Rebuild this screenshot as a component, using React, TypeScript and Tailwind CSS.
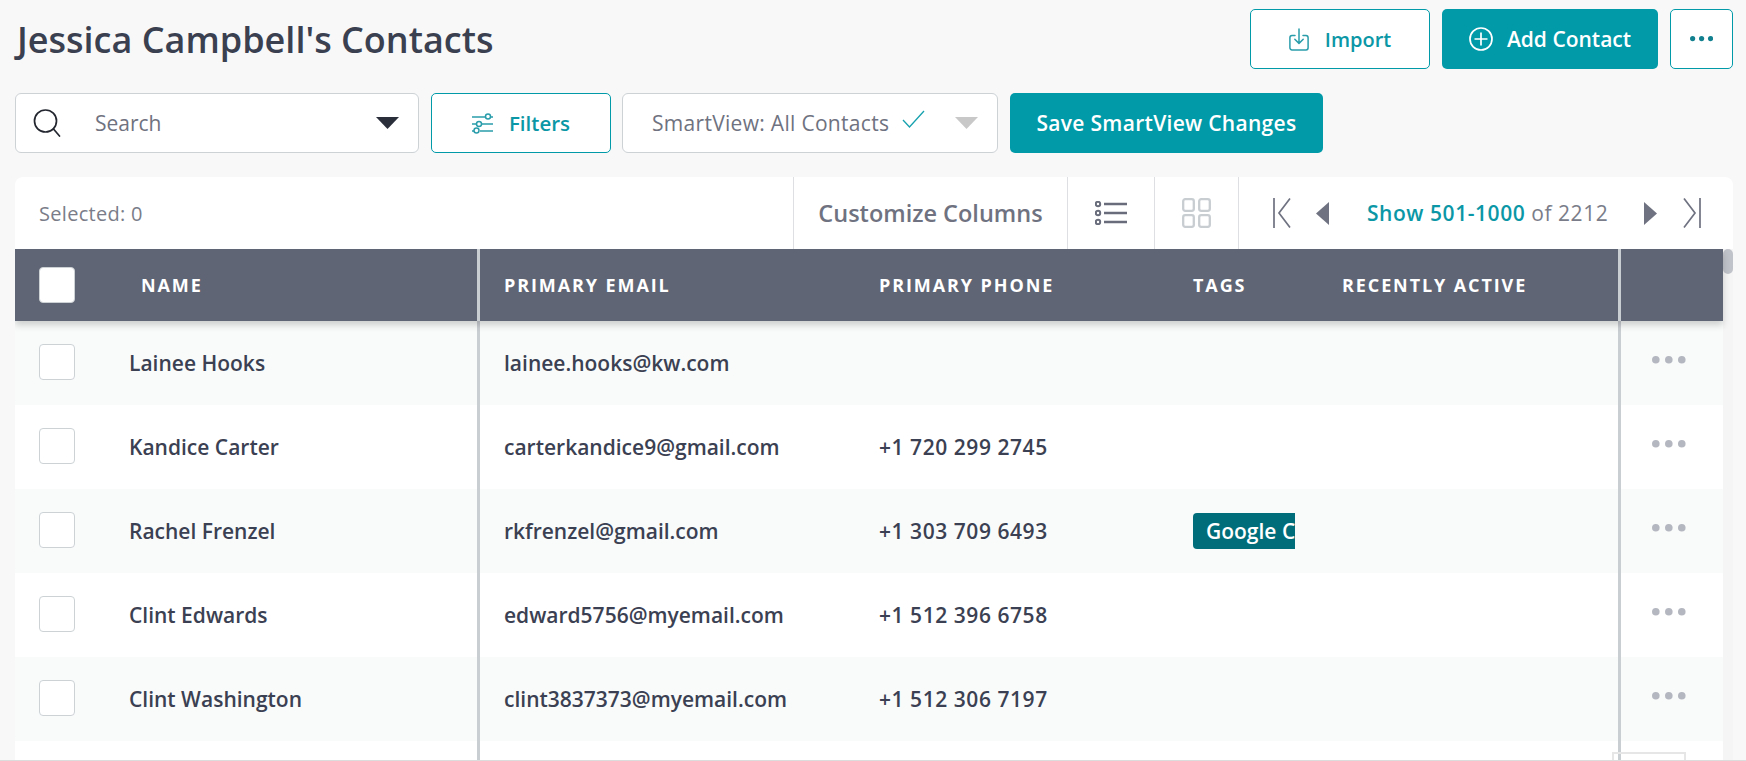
import React from "react";

const rows = [
  { name: "Lainee Hooks", email: "lainee.hooks@kw.com", phone: "", tag: false, dim: true },
  { name: "Kandice Carter", email: "carterkandice9@gmail.com", phone: "+1 720 299 2745", tag: false, dim: false },
  { name: "Rachel Frenzel", email: "rkfrenzel@gmail.com", phone: "+1 303 709 6493", tag: true, dim: true },
  { name: "Clint Edwards", email: "edward5756@myemail.com", phone: "+1 512 396 6758", tag: false, dim: false },
  { name: "Clint Washington", email: "clint3837373@myemail.com", phone: "+1 512 306 7197", tag: false, dim: true },
];

function Dots({ fill, r = 3.4, gap = 13 }: { fill: string; r?: number; gap?: number }) {
  const w = gap * 2 + r * 2;
  return (
    <svg width={w} height={r * 2} viewBox={`0 0 ${w} ${r * 2}`}>
      {[0, 1, 2].map((i) => (
        <circle key={i} cx={r + i * gap} cy={r} r={r} fill={fill} />
      ))}
    </svg>
  );
}

export default function App() {
  return (
    <div className="relative flex h-[761px] w-full flex-col overflow-hidden bg-[#f8f8f8] pt-[9px] pr-[13px] pl-[15px] font-['Open_Sans',sans-serif]">
      <div className="flex h-[60px] items-center">
        <h1 className="flex-1 pt-[2px] pl-[2px] text-[36px] leading-[58px] font-semibold text-[#3a4050]">Jessica Campbell's Contacts</h1>
        <button className="mr-3 flex h-[60px] w-[180px] items-center justify-center gap-4 rounded-[5px] border border-[#009aa9] bg-white text-[20px] font-semibold text-[#0b97a6]">
          <svg width="20" height="23" viewBox="0 0 20 23" fill="none" stroke="#2a9dab" strokeWidth="1.5" strokeLinecap="round" strokeLinejoin="round">
            <path d="M6 7.5H3A2.2 2.2 0 0 0 .9 9.7v9.9A2.2 2.2 0 0 0 3 21.9h14a2.2 2.2 0 0 0 2.1-2.2V9.700A2.2 2.2 0 0 0 17 7.500h-3" />
            <path d="M10 1v14M5.800 11.200 10 15.400l4.200-4.200" />
          </svg>
          <span className="pt-[2px]">Import</span>
        </button>
        <button className="mr-3 flex h-[60px] w-[216px] items-center justify-center gap-[14px] rounded-[5px] bg-[#009aa9] text-[21px] font-semibold text-white">
          <svg width="24" height="24" viewBox="0 0 24 24" fill="none" stroke="#fff" strokeWidth="1.700">
            <circle cx="12" cy="12" r="11" />
            <path d="M12 5.500v13M5.500 12h13" />
          </svg>
          <span className="pt-[2px]">Add Contact</span>
        </button>
        <button className="flex h-[60px] w-[63px] items-center justify-center rounded-[5px] border border-[#009aa9] bg-white">
          <Dots fill="#13808f" r={2.600} gap={9} />
        </button>
      </div>

      <div className="mt-6 flex h-[60px] items-stretch gap-3">
        <div className="flex w-[404px] items-center rounded-[6px] border border-[#cdd2d5] bg-white pr-[19px] pl-[17px]">
          <svg width="28" height="28" viewBox="0 0 28 28" fill="none" stroke="#23262f" strokeWidth="1.700" strokeLinecap="round">
            <circle cx="12.500" cy="12" r="11" />
            <path d="m20.500 20 6 7" />
          </svg>
          <span className="ml-[34px] flex-1 pt-[2px] text-[21px] text-[#6f7280]">Search</span>
          <svg width="23" height="12" viewBox="0 0 23 12">
            <path d="M0 0h23L11.500 12z" fill="#2a2d3a" />
          </svg>
        </div>
        <button className="flex w-[180px] items-center justify-center gap-[16px] rounded-[5px] border border-[#009aa9] bg-white text-[20.500px] font-semibold text-[#0b97a6]">
          <svg width="21" height="21" viewBox="0 0 21 21" fill="none" stroke="#2a9dab" strokeWidth="1.500">
            <path d="M0 4h13M19 4h2M0 11h4M10 11h11M0 18h2M8 18h13" />
            <circle cx="16" cy="3.500" r="2.500" />
            <circle cx="7" cy="11" r="2.500" />
            <circle cx="4.500" cy="17.500" r="2.500" />
          </svg>
          <span>Filters</span>
        </button>
        <div className="-ml-px flex w-[376px] items-center rounded-[6px] border border-[#cdd2d5] bg-white pr-[19px] pl-[29px]">
          <span className="pt-[2px] text-[21px] tracking-[0.3px] whitespace-nowrap text-[#6f7280]">SmartView: All Contacts</span>
          <svg className="mb-2 ml-[13px]" width="23" height="18" viewBox="0 0 23 18" fill="none" stroke="#16a1ae" strokeWidth="1.300">
            <path d="m1 10 6.500 7L22 1" />
          </svg>
          <span className="flex-1" />
          <svg width="23" height="12" viewBox="0 0 23 12">
            <path d="M0 0h23L11.500 12z" fill="#c8c8c8" />
          </svg>
        </div>
        <button className="w-[313px] rounded-[5px] bg-[#009aa9] pt-[2px] text-[21px] font-semibold tracking-[0.3px] text-white">Save SmartView Changes</button>
      </div>

      <div className="mt-6 flex min-h-0 flex-1 flex-col rounded-t-[8px] bg-white">
        <div className="flex h-[72px] shrink-0 items-stretch">
          <div className="flex w-[778px] items-center pt-[2px] pl-6 text-[20px] tracking-[0.3px] text-[#7a7d89]">Selected: 0</div>
          <div className="flex w-[274px] items-center justify-center border-l border-[#dddfe2] pt-[2px] text-[23.500px] font-semibold text-[#6f7280]">Customize Columns</div>
          <div className="flex w-[87px] items-center justify-center border-l border-[#dddfe2]">
            <svg width="32" height="24" viewBox="0 0 32 24" fill="none" stroke="#696c7b" strokeWidth="2">
              <circle cx="3" cy="3" r="2.200" />
              <circle cx="3" cy="12" r="2.200" />
              <circle cx="3" cy="21" r="2.200" />
              <path d="M9 3h23M9 12h23M9 21h23" strokeWidth="2.400" />
            </svg>
          </div>
          <div className="flex w-[84px] items-center justify-center border-l border-[#dddfe2]">
            <svg width="29" height="30" viewBox="0 0 29 30" fill="none" stroke="#c8cdd2" strokeWidth="2.300">
              <rect x="1.200" y="1.200" width="10.600" height="11.600" rx="2" />
              <rect x="17.200" y="1.200" width="10.600" height="11.600" rx="2" />
              <rect x="1.200" y="17.200" width="10.600" height="11.600" rx="2" />
              <rect x="17.200" y="17.200" width="10.600" height="11.600" rx="2" />
            </svg>
          </div>
          <div className="flex flex-1 items-center border-l border-[#dddfe2] pl-[34px]">
            <svg width="18" height="30" viewBox="0 0 18 30" fill="none" stroke="#6f7280" strokeWidth="1.700">
              <path d="M1 0v30M17 .500 6 15l11 14.500" />
            </svg>
            <svg className="ml-[25px]" width="13" height="23" viewBox="0 0 13 23">
              <path d="M13 0v23L0 11.500z" fill="#6f7280" />
            </svg>
            <span className="ml-[38px] w-[240px] pt-px text-[21px] tracking-[0.55px] whitespace-nowrap text-[#7a7d89]">
              <span className="font-semibold text-[#0b97a6]">Show 501-1000</span> of 2212
            </span>
            <svg className="ml-[37px]" width="13" height="23" viewBox="0 0 13 23">
              <path d="M0 0v23l13-11.500z" fill="#6f7280" />
            </svg>
            <svg className="ml-[26px]" width="18" height="30" viewBox="0 0 18 30" fill="none" stroke="#6f7280" strokeWidth="1.700">
              <path d="M17 0v30M1 .500 12 15 1 29.500" />
            </svg>
          </div>
        </div>

        <div className="relative flex min-h-0 flex-1 overflow-hidden">
          <div className="flex min-w-0 flex-1 flex-col">
            <div className="relative z-10 flex h-[72px] shrink-0 bg-[#5f6575] text-[18px] font-bold tracking-[1.900px] text-white shadow-[0_4px_7px_rgba(0,0,0,0.18)]">
              <div className="flex w-[465px] items-center border-r-[3px] border-[#c9ced3] pl-6">
                <span className="h-9 w-9 rounded-[4px] border border-[#cdd2d5] bg-white" />
                <span className="ml-[66px]">NAME</span>
              </div>
              <div className="flex w-[1141px] items-center border-r-[3px] border-[#c9ced3]">
                <span className="w-[399px] pl-6">PRIMARY EMAIL</span>
                <span className="w-[314px]">PRIMARY PHONE</span>
                <span className="w-[149px]">TAGS</span>
                <span>RECENTLY ACTIVE</span>
              </div>
              <div className="flex-1" />
            </div>
            {rows.map((r) => (
              <div key={r.name} className={`flex h-[84px] shrink-0 text-[21px] font-semibold text-[#3b4152] ${r.dim ? "bg-[#f9fbfb]" : "bg-white"}`}>
                <div className="flex w-[465px] items-center border-r-[3px] border-[#c9ced3] pl-6">
                  <span className="mb-0.5 h-9 w-9 rounded-[4px] border border-[#cdd2d5] bg-white" />
                  <span className="ml-[54px] pt-[2px]">{r.name}</span>
                </div>
                <div className="flex w-[1141px] items-center border-r-[3px] border-[#c9ced3]">
                  <span className="w-[399px] pt-[2px] pl-6">{r.email}</span>
                  <span className="w-[314px] pt-[2px] tracking-[0.55px]">{r.phone}</span>
                  {r.tag && (
                    <span className="h-9 w-[102px] overflow-hidden rounded-l-[4px] bg-[#006e7a] pl-[13px] leading-9 font-semibold whitespace-nowrap text-white">Google Contacts</span>
                  )}
                </div>
                <div className="flex flex-1 items-start pt-[35px] pl-[31px]">
                  <Dots fill="#b4b7bf" r={3.800} gap={13} />
                </div>
              </div>
            ))}
            <div className="flex h-5 shrink-0 bg-white">
              <div className="w-[465px] border-r-[3px] border-[#c9ced3]" />
              <div className="w-[1141px] border-r-[3px] border-[#c9ced3]" />
            </div>
          </div>
          <div className="w-[10px] shrink-0 bg-[#f5f5f5]">
            <div className="h-[25px] w-[10px] rounded-[5px] bg-[#c1c3ca]" />
          </div>
        </div>
      </div>

      <div className="absolute right-[60px] bottom-[-4px] h-[13px] w-[74px] border-2 border-[#e6e6e6]" />
      <div className="absolute right-0 bottom-0 left-0 h-px bg-[#dcdcdc]" />
    </div>
  );
}
